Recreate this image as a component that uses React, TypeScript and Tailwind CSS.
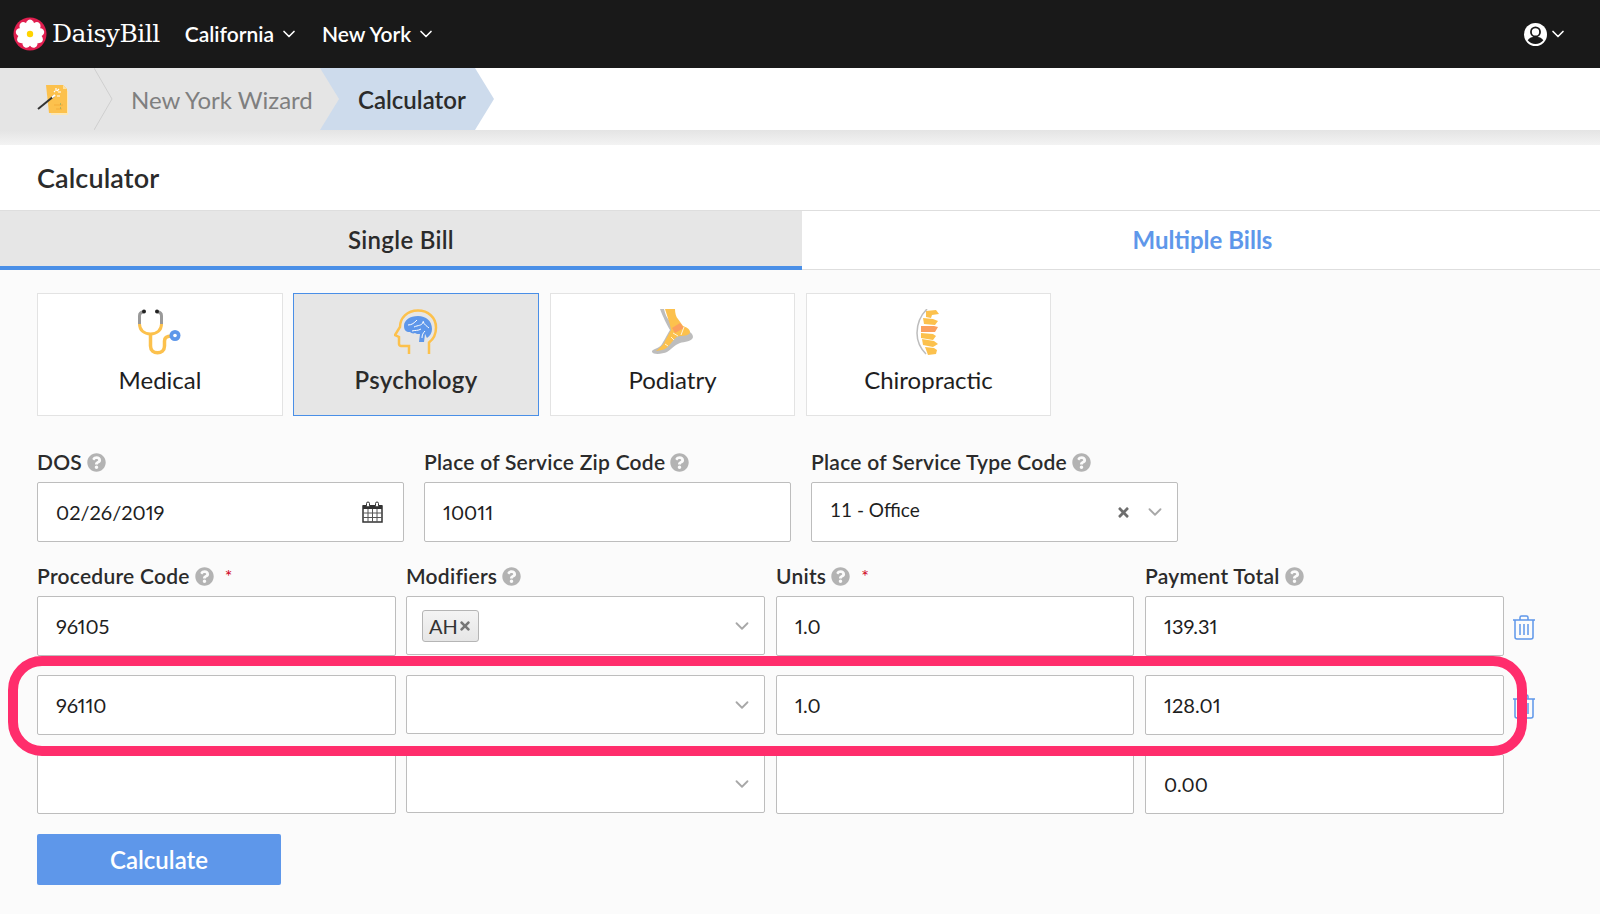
import { ChevronDown } from "lucide-react";
import { FaQuestionCircle, FaTimes } from "react-icons/fa";

function DaisyLogo() {
  return (
    <svg width="34" height="34" viewBox="0 0 34 34">
      <circle cx="17" cy="17" r="16.5" fill="#e01e4f" />
      {[0, 40, 80, 120, 160, 200, 240, 280, 320].map((a) => (
        <ellipse key={a} cx="17" cy="8.8" rx="4.6" ry="6.2" fill="#fff" transform={`rotate(${a} 17 17)`} />
      ))}
      <circle cx="17" cy="17" r="3.2" fill="#ffd400" />
    </svg>
  );
}

function UserIcon() {
  return (
    <svg width="23" height="23" viewBox="0 0 22 22">
      <circle cx="11" cy="11" r="11" fill="#fff" />
      <circle cx="11" cy="8.500" r="5.200" fill="#191919" />
      <circle cx="11" cy="8.500" r="3.500" fill="#fff" />
      <path d="M3.500 16.500c1.500-2.400 4-3.400 7.500-3.400s6 1 7.500 3.400c-1.800 2.300-4.400 3.500-7.500 3.500s-5.700-1.200-7.500-3.500z" fill="#191919" />
    </svg>
  );
}

function WizardIcon() {
  return (
    <svg width="38" height="34" viewBox="0 0 38 34">
      <path d="M14 8h17v24H14z" fill="#fde7b4" />
      <path d="M9 2h17l4 4v24H12z" fill="#fcc14d" />
      <path d="M26 2l4 4h-4z" fill="#fde0a0" />
      <path d="M1 26L17 13" stroke="#333" strokeWidth="2" />
      <path d="M15 14.500L18 12" stroke="#fff" strokeWidth="2" />
      <path d="M19 5v3M24 9h-3M22 6l-2 2M23 13h-3M17 8l1 1" stroke="#fff" strokeWidth="1.200" />
      <path d="M17 22h9M19 26h6" stroke="#f4ad3a" strokeWidth="1" />
      <path d="M23 21h1M23 25h1" stroke="#6aa56a" strokeWidth="1" />
    </svg>
  );
}

function Stethoscope() {
  return (
    <svg width="46" height="46" viewBox="0 0 46 46">
      <path d="M2.500 15V7c0-3 2-4 4-4M24.500 15V7c0-3-2-4-4-4" fill="none" stroke="#999" strokeWidth="3" />
      <circle cx="7" cy="2.500" r="2" fill="#222" />
      <circle cx="20" cy="2.500" r="2" fill="#222" />
      <path d="M2.500 15c0 6 4.500 10 11 10s11-4 11-10" fill="none" stroke="#fcc14d" strokeWidth="3" />
      <path d="M13.500 25v12c0 9 14 9 14 0v-5c0-4 3-5 7-5" fill="none" stroke="#fcc14d" strokeWidth="3.500" />
      <circle cx="38" cy="26.500" r="5.500" fill="#5e97ea" />
      <circle cx="38" cy="26.500" r="1.800" fill="#fff" />
    </svg>
  );
}

function BrainHead() {
  return (
    <svg width="44" height="46" viewBox="0 0 44 46">
      <path d="M15 45V37H7c-1 0-2-1-2-2v-7l-4-2 5-8C6 9 13 1.500 24 1.500c10 0 18 7 18 17 0 7-3 12-7 15V45" fill="none" stroke="#fcc14d" strokeWidth="2.500" />
      <path d="M10 17c0-6 6-10 14-10 8 0 14 5 14 13 0 4-2 7-5 9-1-1-1-3-2-4l-1 8h-5l1-8c-2 0-4 0-5-1-2 1-4 0-5-1-2 0-6 0-6-6z" fill="#5e97ea" />
      <path d="M14 16c4 0 6-2 9-5M20 18c4-2 8-1 9-5M29 12c1 4 4 5 6 7M28 29c0-3 1-5 3-7M18 22c3-1 6 0 9-2" fill="none" stroke="#fff" strokeWidth="1" />
    </svg>
  );
}

function Foot() {
  return (
    <svg width="44" height="46" viewBox="0 0 44 46">
      <path d="M13 0c1 5 3 9 5 11 2 3 5 2 10 8 4 1 14 3 14 9 0 4-9 5-13 6-6 2-9 7-13 9-4 2-14 3-15 0-1-3 7-3 10-8 3-5 6-11 8-14C16 16 12 8 9 0z" fill="#bdbdbd" />
      <path d="M14 0h10c0 4 1 8 3 10l5 7c3 1 7 3 7 6 0 3-5 4-10 4-3 0-5 2-8 6-3 4-6 7-10 8l-6 1c3-3 7-5 9-10l6-11C19 14 16 7 14 0z" fill="#fcc14d" />
      <path d="M21 19l8-5 4 5-9 5z" fill="#fb9f5e" />
      <path d="M27 27l-5-3M20 28l3 3M14 35l3 2M33 18l-3 8" stroke="#fff" strokeWidth="0.800" />
    </svg>
  );
}

function Spine() {
  return (
    <svg width="26" height="46" viewBox="0 0 26 46">
      <path d="M11 0C3 8 1 16 1 24c0 8 3 15 9 21" fill="none" stroke="#bdbdbd" strokeWidth="1.500" />
      <path d="M10 2l10-1 3 4-7 1-1 3-5-1z" fill="#fcc14d" />
      <path d="M7 9l10 1 5 2-3 4-11-1z" fill="#fcc14d" />
      <path d="M5 17h13l4 1-3 5-14 0z" fill="#fb9f5e" />
      <path d="M5 24l12 1 3 2-3 4-12-2z" fill="#fcc14d" />
      <path d="M6 30l12 2 4 3-5 3-10-2z" fill="#fcc14d" />
      <path d="M9 38l9 1 3 2-1 4-8 1z" fill="#fcc14d" />
    </svg>
  );
}

function CalendarIcon() {
  return (
    <svg width="21" height="22" viewBox="0 0 21 22">
      <path d="M1 5h19v16H1z" fill="#fff" stroke="#333" strokeWidth="1.500" />
      <path d="M1 4h19v4H1z" fill="#333" />
      <path d="M1 12h19M1 16.500h19M6 8v13M10.500 8v13M15 8v13" stroke="#555" strokeWidth="1" />
      <rect x="4.500" y="1" width="3" height="5" rx="1.500" fill="#fff" stroke="#333" />
      <rect x="13.500" y="1" width="3" height="5" rx="1.500" fill="#fff" stroke="#333" />
    </svg>
  );
}

function TrashIcon() {
  return (
    <svg width="24" height="25" viewBox="0 0 24 25" fill="none" stroke="#5e97ea" strokeWidth="1.500">
      <path d="M1 5h22M8 5V2.500C8 1.500 9 1 9.500 1h5c.5 0 1.500.5 1.500 1.500V5" />
      <path d="M3 5v17c0 1.200 1 2 2 2h14c1 0 2-.8 2-2V5" />
      <path d="M8 9v11M12 9v11M16 9v11" />
    </svg>
  );
}

function FieldLabel({ text, required }: { text: string; required?: boolean }) {
  return (
    <label className="flex h-[24px] items-center gap-[5px] text-[21px] font-semibold leading-[24px] tracking-[0.25px] text-[#2b2b2b]">
      {text}
      <FaQuestionCircle className="shrink-0 text-[19px] text-[#b3b3b3]" />
      {required && <span className="ml-[6px] text-[18px] font-normal leading-[18px] text-[#d0021b]">*</span>}
    </label>
  );
}

function TextBox({ value, className }: { value?: string; className: string }) {
  return (
    <div className={`flex h-[60px] items-center rounded-[2px] border border-[#bdbdbd] bg-white pl-[18px] text-[20px] text-[#1e1e1e] proportional-nums ${className}`}>
      {value}
    </div>
  );
}

function SelectBox({ children, className }: { children?: React.ReactNode; className: string }) {
  return (
    <div className={`flex h-[59px] items-center rounded-[2px] border border-[#bdbdbd] bg-white pr-[11px] ${className}`}>
      <div className="flex-1">{children}</div>
      <ChevronDown className="text-[#a8a8a8]" size={22} strokeWidth={2} />
    </div>
  );
}

const tiles = [
  { name: "Medical", icon: <Stethoscope />, w: "w-[246px]", mr: "mr-[10px]" },
  { name: "Psychology", icon: <BrainHead />, w: "w-[246px]", mr: "mr-[11px]", active: true },
  { name: "Podiatry", icon: <Foot />, w: "w-[245px]", mr: "mr-[11px]" },
  { name: "Chiropractic", icon: <Spine />, w: "w-[245px]", mr: "" },
];

const rows = [
  { id: 1, code: "96105", units: "1.0", total: "139.31", mod: true, trash: true },
  { id: 2, code: "96110", units: "1.0", total: "128.01", trash: true },
  { id: 3, code: "", units: "", total: "0.00" },
];

export default function App() {
  return (
    <div className="relative flex h-[914px] w-[1600px] flex-col overflow-hidden bg-[#fbfbfb] font-['Lato',sans-serif] text-[#1e1e1e]">
      {/* top bar */}
      <header className="flex h-[68px] shrink-0 items-center bg-[#191919] pl-[13px] pr-[32px] text-white">
        <DaisyLogo />
        <span className="ml-[5px] font-['DejaVu_Serif',serif] text-[25px] tracking-[-0.5px]">DaisyBill</span>
        <button className="ml-[25px] flex items-center gap-[5px] text-[21px] font-semibold">
          California <ChevronDown size={20} strokeWidth={2} />
        </button>
        <button className="ml-[23px] flex items-center gap-[5px] text-[21px] font-semibold">
          New York <ChevronDown size={20} strokeWidth={2} />
        </button>
        <div className="ml-auto flex items-center gap-[1px]">
          <UserIcon />
          <ChevronDown size={20} strokeWidth={2} />
        </div>
      </header>

      {/* breadcrumbs */}
      <nav className="flex h-[62px] shrink-0 bg-white">
        <div className="relative z-10 flex w-[339px] items-center bg-[#e5e5e5] pt-[1px] text-[24px] text-[#7f7f7f] [clip-path:polygon(0_0,320px_0,339px_50%,320px_100%,0_100%)]">
          <div className="flex w-[131px] shrink-0 items-center pl-[37px]">
            <WizardIcon />
          </div>
          <svg className="absolute left-[94px] top-0" width="20" height="62" viewBox="0 0 20 62" fill="none" stroke="#cfcfcf">
            <path d="M0 0l18 31L0 62" />
          </svg>
          New York Wizard
        </div>
        <div className="-ml-[19px] flex w-[174px] items-center bg-[#cddbec] pl-[38px] pt-[1px] text-[24px] font-semibold text-[#2b2b2b] [clip-path:polygon(0_0,155px_0,174px_50%,155px_100%,0_100%)]">
          Calculator
        </div>
      </nav>
      <div className="h-[15px] shrink-0 bg-gradient-to-b from-[#e4e4e4] to-[#f3f3f3]" />

      {/* page title */}
      <div className="flex h-[65px] shrink-0 items-center bg-white pl-[37px] pt-[2px] text-[27px] font-semibold tracking-[0.1px] text-[#2b2b2b]">
        Calculator
      </div>

      {/* tabs */}
      <div className="flex h-[60px] shrink-0 border-t border-[#dedede]">
        <div className="flex w-[802px] items-center justify-center border-b-[4px] border-[#4a8fe7] bg-[#e6e6e6] pt-[2px] text-[24px] font-semibold tracking-[0.3px] text-[#2b2b2b]">
          Single Bill
        </div>
        <div className="flex flex-1 items-center justify-center border-b border-[#dedede] bg-white pl-[3px] text-[24px] font-bold text-[#5e97ea]">
          Multiple Bills
        </div>
      </div>

      <main className="flex flex-1 flex-col pl-[37px] pt-[23px]">
        {/* specialty tiles */}
        <div className="flex h-[123px]">
          {tiles.map((t) => (
            <div
              key={t.name}
              className={`flex flex-col items-center border pt-[15px] text-[24px] ${t.w} ${t.mr} ${
                t.active ? "border-[#4a8fe7] bg-[#e6e6e6] font-semibold tracking-[0.3px] text-[#2b2b2b]" : "border-[#e3e3e3] bg-white"
              }`}
            >
              <div className="flex h-[46px] items-center">{t.icon}</div>
              <span className="mt-[7px]">{t.name}</span>
            </div>
          ))}
        </div>

        {/* DOS row */}
        <div className="mt-[34px] flex gap-[20px]">
          <div className="w-[367px]">
            <FieldLabel text="DOS" />
            <div className="mt-[8px] flex h-[60px] items-center justify-between rounded-[2px] border border-[#bdbdbd] bg-white pl-[18px] pr-[20px] text-[20px] proportional-nums">
              02/26/2019
              <CalendarIcon />
            </div>
          </div>
          <div className="w-[367px]">
            <FieldLabel text="Place of Service Zip Code" />
            <TextBox value="10011" className="mt-[8px]" />
          </div>
          <div className="w-[367px]">
            <FieldLabel text="Place of Service Type Code" />
            <div className="mt-[8px] flex h-[60px] items-center rounded-[2px] border border-[#bdbdbd] bg-white pl-[18px] pr-[11px] text-[19px]">
              <span className="flex-1 pb-[3px]">11 - Office</span>
              <FaTimes className="mr-[13px] text-[15px] text-[#6e6e6e]" />
              <ChevronDown className="text-[#a8a8a8]" size={22} strokeWidth={2} />
            </div>
          </div>
        </div>

        {/* procedure lines */}
        <div className="mt-[22px] grid grid-cols-[369px_370px_369px_358px]">
          <FieldLabel text="Procedure Code" required />
          <FieldLabel text="Modifiers" />
          <FieldLabel text="Units" required />
          <FieldLabel text="Payment Total" />
        </div>
        <div className="mt-[8px] flex flex-col gap-[19px]">
          {rows.map((r) => (
            <div key={r.id} className="flex items-start">
              <TextBox value={r.code} className="w-[359px]" />
              <SelectBox className="ml-[10px] w-[359px]">
                {r.mod && (
                  <span className="ml-[15px] inline-flex h-[32px] items-center rounded-[3px] border border-[#b5b5b5] bg-gradient-to-b from-[#f4f4f4] to-[#e6e6e6] px-[6px] text-[20px] text-[#333]">
                    AH
                    <FaTimes className="text-[14px] text-[#777]" />
                  </span>
                )}
              </SelectBox>
              <TextBox value={r.units} className="ml-[11px] w-[358px]" />
              <TextBox value={r.total} className="ml-[11px] w-[359px]" />
              {r.trash && (
                <div className="ml-[8px] mt-[19px]">
                  <TrashIcon />
                </div>
              )}
            </div>
          ))}
        </div>

        <button className="mt-[20px] h-[51px] w-[244px] rounded-[2px] bg-[#5e97ea] text-[24px] font-semibold text-white">
          Calculate
        </button>
      </main>

      {/* highlight drawn over the second row */}
      <div className="pointer-events-none absolute left-[8px] top-[656px] h-[100px] w-[1519px] rounded-[34px] border-[10px] border-[#ff2d6c]" />
    </div>
  );
}
